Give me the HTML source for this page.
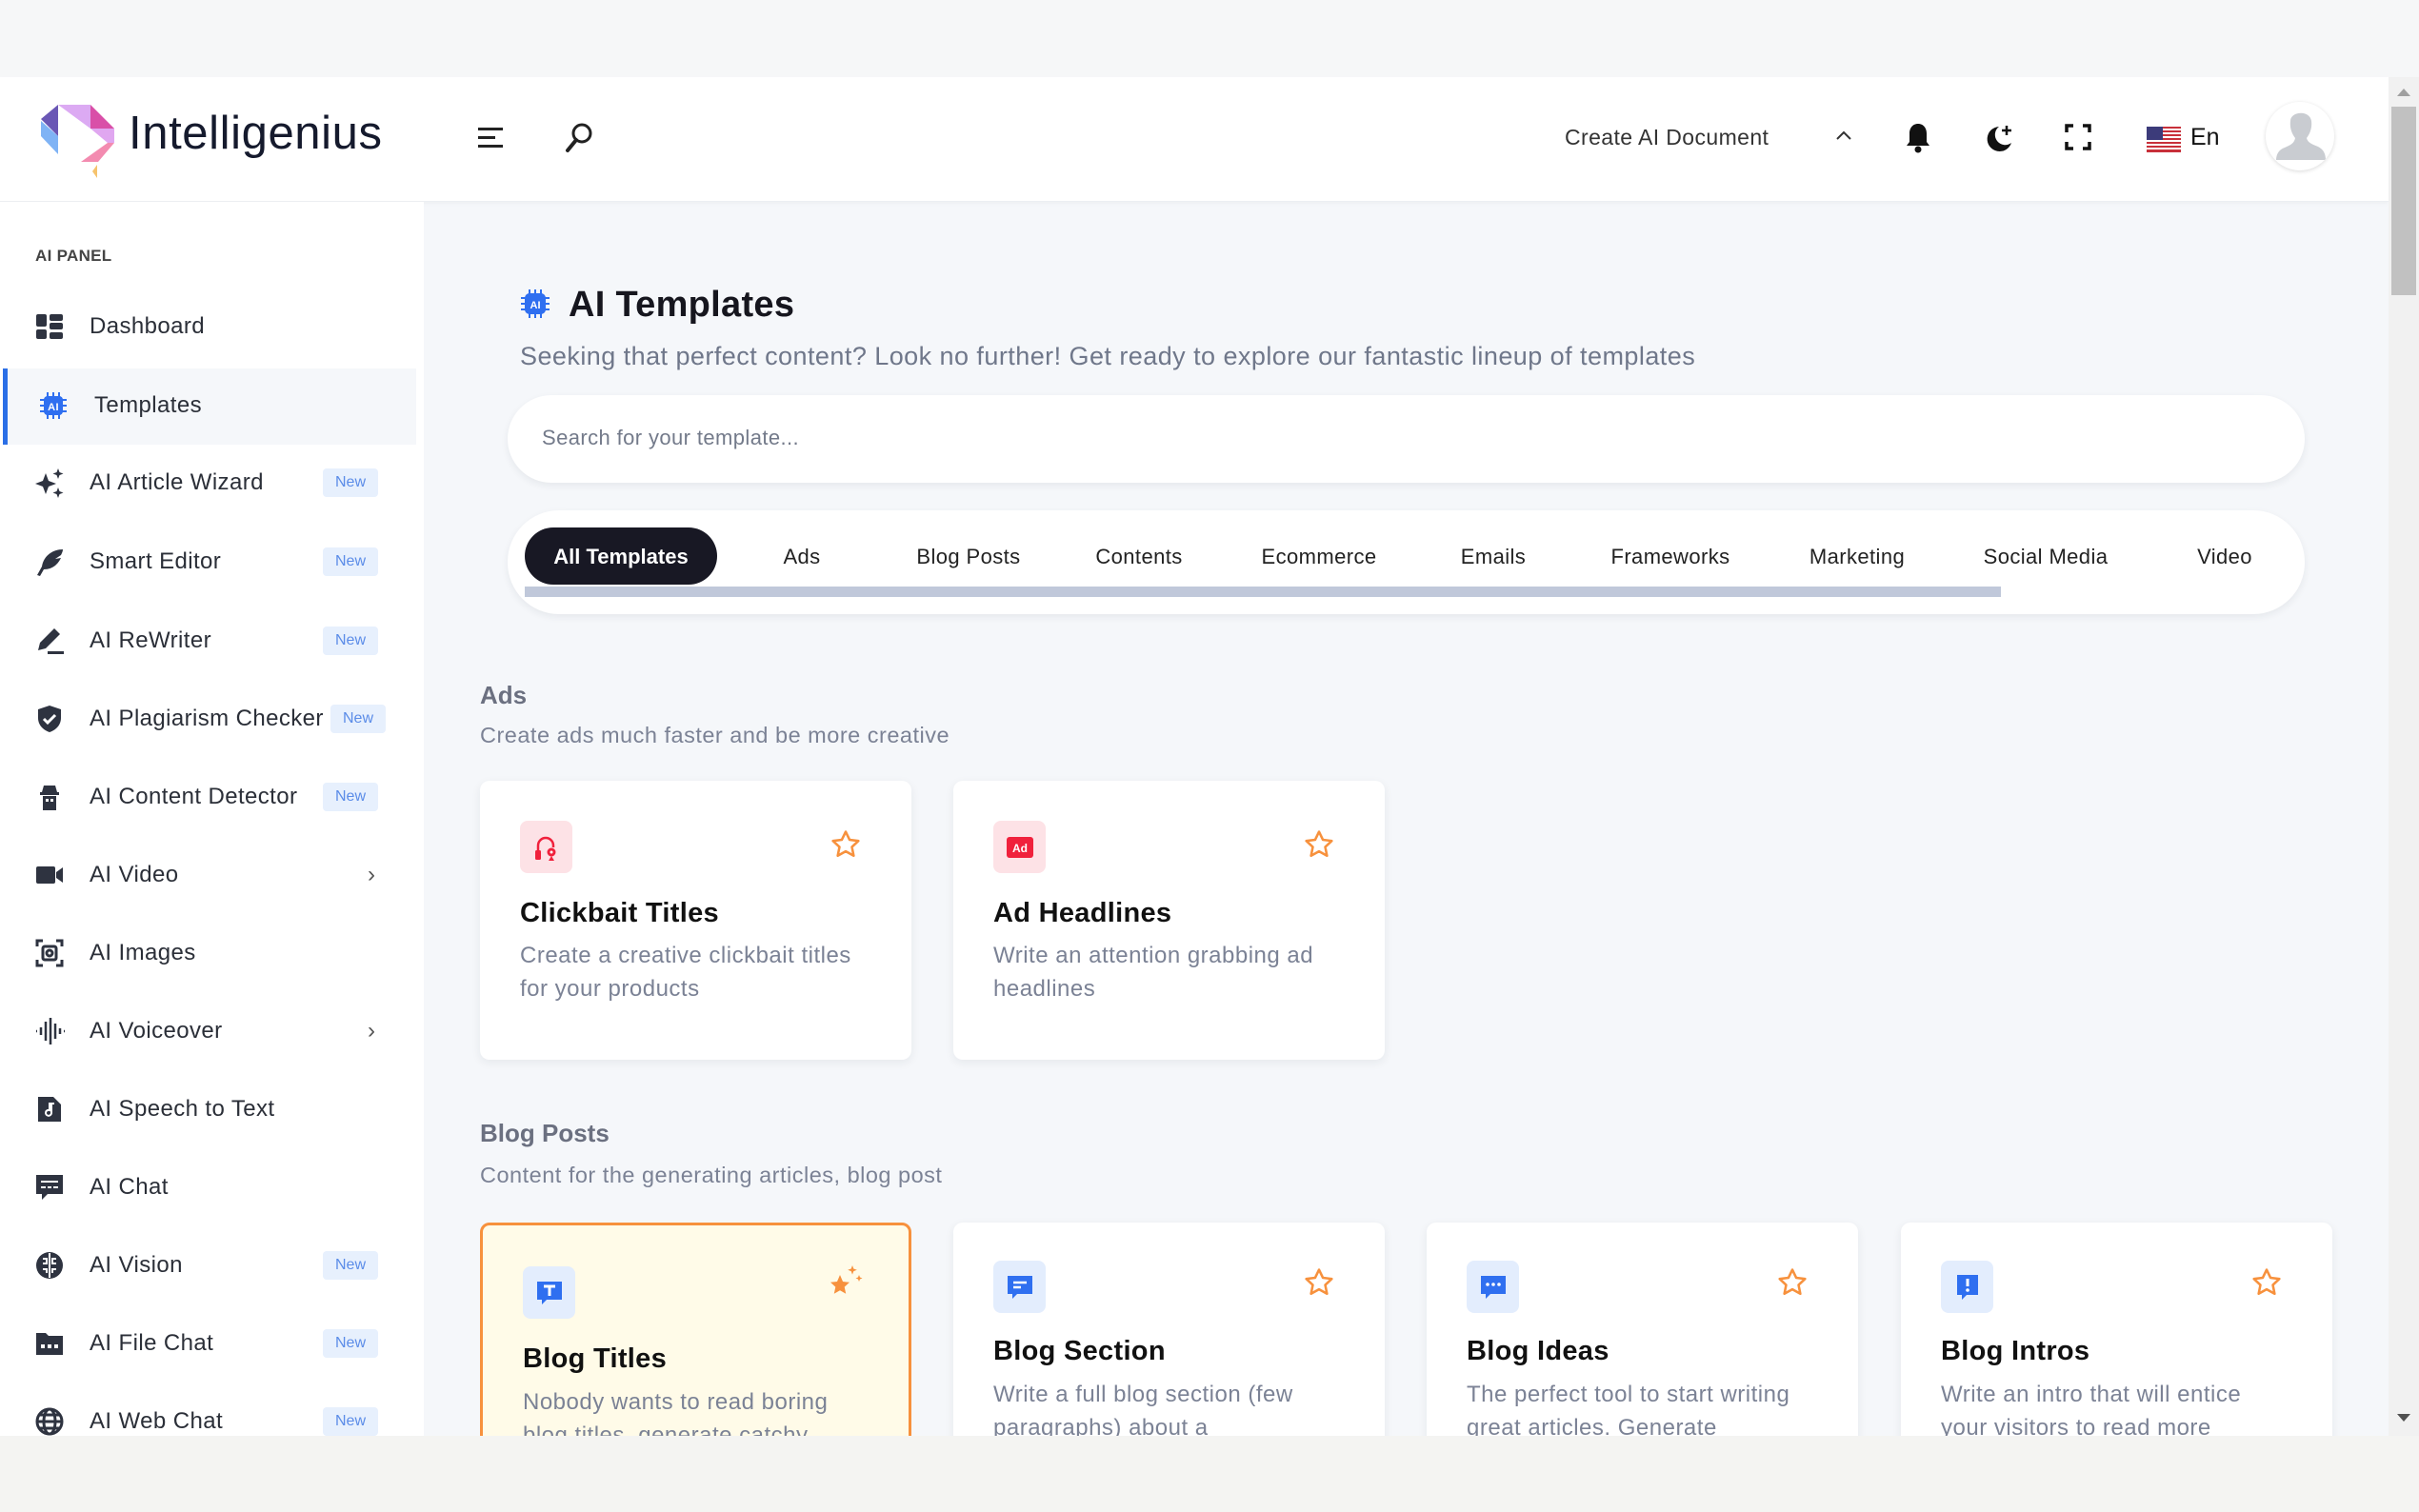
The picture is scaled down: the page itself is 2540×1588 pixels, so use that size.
<!DOCTYPE html>
<html><head><meta charset="utf-8">
<style>
*{box-sizing:border-box;margin:0;padding:0}
body{width:2540px;height:1588px;overflow:hidden;background:#f5f7fa;font-family:"Liberation Sans",sans-serif;position:relative;color:#1f2937}
.a{position:absolute}
.topband{left:0;top:0;width:2540px;height:81px;background:#f6f7f8}
.header{left:0;top:81px;width:2508px;height:131px;background:#fff;border-bottom:1px solid #eceef2;box-shadow:0 2px 4px rgba(0,0,0,.03)}
.side{left:0;top:212px;width:445px;height:1296px;background:#fff}
.botband{left:0;top:1508px;width:2540px;height:80px;background:#f4f4f2}
.sb{left:2508px;top:81px;width:32px;height:1427px;background:#f1f1f1}
.thumb{left:2511px;top:112px;width:26px;height:198px;background:#c1c1c1}
.item{position:absolute;left:0;width:440px;height:60px;display:flex;align-items:center;font-size:24px;color:#2b2f38;letter-spacing:.4px}
.item svg{position:absolute;left:36px;width:32px;height:32px}
.item span.t{position:absolute;left:94px}
.new{position:absolute;left:339px;width:58px;height:30px;background:#e7f0fd;color:#5b8ce8;font-size:16px;border-radius:4px;display:flex;align-items:center;justify-content:center;letter-spacing:0}
.chev{position:absolute;left:386px;font-size:24px;color:#555}
.card{position:absolute;width:453px;background:#fff;border-radius:10px;box-shadow:0 3px 10px rgba(30,40,60,.07)}
.ibox{position:absolute;left:42px;width:55px;height:55px;border-radius:8px;display:flex;align-items:center;justify-content:center}
.ctitle{position:absolute;left:42px;font-size:29px;font-weight:bold;color:#111;letter-spacing:.3px}
.cdesc{position:absolute;left:42px;width:355px;font-size:24px;line-height:35px;color:#7b8295;letter-spacing:.5px}
.star{position:absolute;left:367px;width:34px;height:34px}
.tab{position:absolute;top:572px;font-size:22px;color:#222;transform:translateX(-50%);white-space:nowrap;letter-spacing:.4px}
</style></head><body>
<div class="a topband"></div>
<div class="a header"></div>
<svg class="a" style="left:0;top:90px" width="140" height="110" viewBox="0 90 140 110">
<polygon points="61,110 43,125 61,143" fill="#6a57b5"/>
<polygon points="43,127 61,143 61,162 43,143" fill="#7fb3f5"/>
<polygon points="61,110 95,110 95,135" fill="#dcaaf3"/>
<polygon points="95,110 120,135 95,135" fill="#d94fa8"/>
<polygon points="95,135 120,135 120,150 113,150" fill="#e0a7f0"/>
<polygon points="113,150 120,150 103,170 85,170" fill="#f38bb0"/>
<polygon points="102,173 102,187 97,180" fill="#f6c36d"/>
</svg>
<div class="a" style="left:135px;top:112px;font-size:49px;color:#151a2d;letter-spacing:0.6px">Intelligenius</div>
<svg class="a" style="left:502px;top:132px" width="28" height="26"><rect x="0" y="2" width="26" height="3" fill="#222"/><rect x="0" y="11" width="18" height="3" fill="#222"/><rect x="0" y="20" width="26" height="3" fill="#222"/></svg>
<svg class="a" style="left:592px;top:128px" width="32" height="34" viewBox="0 0 32 34"><circle cx="19" cy="12" r="9" fill="none" stroke="#222" stroke-width="3"/><line x1="13" y1="19" x2="4" y2="30" stroke="#222" stroke-width="4" stroke-linecap="round"/></svg>
<div class="a" style="left:1643px;top:131px;font-size:23px;color:#333;letter-spacing:.4px">Create AI Document</div>
<svg class="a" style="left:1927px;top:136px" width="18" height="12"><polyline points="2,10 9,3 16,10" fill="none" stroke="#333" stroke-width="2"/></svg>
<svg class="a" style="left:2000px;top:128px" width="28" height="34" viewBox="0 0 28 34"><path d="M14 2c-6 0-9 5-9 10v9l-3 4h24l-3-4v-9c0-5-3-10-9-10z" fill="#111"/><circle cx="14" cy="29" r="3.5" fill="#111"/></svg>
<svg class="a" style="left:2082px;top:125px" width="36" height="38" viewBox="0 0 36 38"><path d="M17 8a13 13 0 1 0 13 17a10 10 0 0 1 -13 -17z" fill="#111"/><path d="M25 7v10M20 12h10" stroke="#111" stroke-width="2.5"/></svg>
<svg class="a" style="left:2168px;top:130px" width="28" height="28" fill="none" stroke="#111" stroke-width="3.5"><path d="M2 9V2h7M19 2h7v7M26 19v7h-7M9 26H2v-7"/></svg>
<svg class="a" style="left:2254px;top:133px" width="36" height="27"><rect width="36" height="27" fill="#fff"/><g fill="#c8303a"><rect y="0" width="36" height="2"/><rect y="4" width="36" height="2"/><rect y="8" width="36" height="2"/><rect y="12" width="36" height="2"/><rect y="16" width="36" height="2"/><rect y="20" width="36" height="2"/><rect y="24" width="36" height="3"/></g><rect width="17" height="14" fill="#3c3b7a"/></svg>
<div class="a" style="left:2300px;top:130px;font-size:25px;color:#111">En</div>
<div class="a" style="left:2379px;top:107px;width:72px;height:72px;border-radius:50%;background:#fff;box-shadow:0 1px 4px rgba(0,0,0,.15);overflow:hidden">
<svg width="72" height="72" viewBox="0 0 72 72"><path d="M26 20c0-10 20-12 22 0c1 8-2 14-5 18c1 4 4 6 12 9c6 3 8 8 8 14H11c0-6 3-11 9-13c7-3 10-5 11-10c-3-4-6-10-5-18z" fill="#c9ccd1"/></svg></div>

<div class="a sb"></div><div class="a thumb"></div>
<svg class="a" style="left:2516px;top:92px" width="16" height="10"><polygon points="8,1 15,9 1,9" fill="#a0a0a0"/></svg>
<svg class="a" style="left:2516px;top:1484px" width="16" height="10"><polygon points="1,1 15,1 8,9" fill="#505050"/></svg>

<div class="a side"></div>
<div class="a" style="left:37px;top:259px;font-size:17px;color:#444;font-weight:bold;letter-spacing:.3px">AI PANEL</div>
<div class="a" style="left:3px;top:387px;width:434px;height:80px;background:#f5f7fa;border-left:5px solid #2b6fe6"></div>

<div class="item" style="top:313px"><svg viewBox="0 0 32 32" fill="#2e3340"><rect x="2" y="3" width="11" height="13" rx="2"/><rect x="2" y="19" width="11" height="10" rx="2"/><rect x="16" y="3" width="14" height="7" rx="2"/><rect x="16" y="12" width="14" height="7" rx="2"/><rect x="16" y="22" width="14" height="7" rx="2"/></svg><span class="t">Dashboard</span></div>
<div class="item" style="top:396px"><svg style="left:40px" viewBox="0 0 32 32"><g stroke="#2f6ff0" stroke-width="2"><path d="M10 2v5M16 2v5M22 2v5M10 25v5M16 25v5M22 25v5M2 10h5M2 16h5M2 22h5M25 10h5M25 16h5M25 22h5"/></g><rect x="6" y="6" width="20" height="20" rx="4" fill="#2f6ff0"/><text x="16" y="21" font-size="11" font-weight="bold" fill="#fff" text-anchor="middle" font-family="Liberation Sans">AI</text></svg><span class="t" style="left:99px">Templates</span></div>
<div class="item" style="top:477px"><svg viewBox="0 0 32 32" fill="#2e3340"><path d="M12 6l3 8 8 3-8 3-3 8-3-8-8-3 8-3z"/><path d="M25 1l1.5 4 4 1.5-4 1.5-1.5 4-1.5-4-4-1.5 4-1.5z"/><path d="M25 21l1.5 4 4 1.5-4 1.5-1.5 4-1.5-4-4-1.5 4-1.5z"/></svg><span class="t">AI Article Wizard</span><div class="new">New</div></div>
<div class="item" style="top:560px"><svg viewBox="0 0 32 32" fill="#2e3340"><path d="M30 3c-10 0-20 6-22 18l-5 9 3 1 4-7c10 0 15-6 18-12l-6 1 6-4c1-2 2-4 2-6z"/></svg><span class="t">Smart Editor</span><div class="new">New</div></div>
<div class="item" style="top:643px"><svg viewBox="0 0 32 32" fill="#2e3340"><path d="M21 3l6 6-15 15-8 2 2-8z"/><rect x="14" y="27" width="17" height="3"/></svg><span class="t">AI ReWriter</span><div class="new">New</div></div>
<div class="item" style="top:725px"><svg viewBox="0 0 32 32"><path d="M16 2l12 4v9c0 8-6 13-12 15C10 28 4 23 4 15V6z" fill="#2e3340"/><path d="M10 16l4 4 8-8" stroke="#fff" stroke-width="3" fill="none"/></svg><span class="t">AI Plagiarism Checker</span><div class="new" style="left:347px">New</div></div>
<div class="item" style="top:807px"><svg viewBox="0 0 32 32" fill="#2e3340"><path d="M10 4h12l2 7H8z"/><rect x="6" y="11" width="20" height="3"/><path d="M9 15h14v15H9z"/><rect x="12" y="18" width="3" height="3" fill="#fff"/><rect x="17" y="18" width="3" height="3" fill="#fff"/></svg><span class="t">AI Content Detector</span><div class="new">New</div></div>
<div class="item" style="top:889px"><svg viewBox="0 0 32 32" fill="#2e3340"><rect x="2" y="7" width="20" height="18" rx="2"/><path d="M23 13l7-5v16l-7-5z"/></svg><span class="t">AI Video</span><span class="chev">›</span></div>
<div class="item" style="top:971px"><svg viewBox="0 0 32 32" fill="none" stroke="#2e3340" stroke-width="3"><path d="M3 9V3h6M23 3h6v6M29 23v6h-6M9 29H3v-6"/><rect x="9" y="9" width="14" height="14" rx="2"/><circle cx="16" cy="16" r="3"/></svg><span class="t">AI Images</span></div>
<div class="item" style="top:1053px"><svg viewBox="0 0 32 32" stroke="#2e3340" stroke-width="2.5"><path d="M2 16h1M7 12v8M12 6v20M17 2v28M22 8v16M27 13v6M31 16h1"/></svg><span class="t">AI Voiceover</span><span class="chev">›</span></div>
<div class="item" style="top:1135px"><svg viewBox="0 0 32 32"><path d="M4 3h16l8 8v18H4z" fill="#2e3340"/><path d="M18 10v10a3 3 0 1 1-2-3V10h5" stroke="#fff" stroke-width="2" fill="none"/></svg><span class="t">AI Speech to Text</span></div>
<div class="item" style="top:1217px"><svg viewBox="0 0 32 32"><path d="M2 3h28v20H14l-6 6v-6H2z" fill="#2e3340"/><path d="M7 10h18M7 16h5M14 16h4M20 16h5" stroke="#fff" stroke-width="2"/></svg><span class="t">AI Chat</span></div>
<div class="item" style="top:1299px"><svg viewBox="0 0 32 32"><circle cx="16" cy="16" r="14" fill="#2e3340"/><path d="M16 3v26M9 9h4v5h-4M23 9h-4v5h4M9 20h4v4M23 20h-4v4" stroke="#fff" stroke-width="2" fill="none"/></svg><span class="t">AI Vision</span><div class="new">New</div></div>
<div class="item" style="top:1381px"><svg viewBox="0 0 32 32"><path d="M2 5h10l3 3h15v20H2z" fill="#2e3340"/><rect x="7" y="17" width="4" height="4" fill="#fff"/><rect x="14" y="17" width="4" height="4" fill="#fff"/><rect x="21" y="17" width="4" height="4" fill="#fff"/></svg><span class="t">AI File Chat</span><div class="new">New</div></div>
<div class="item" style="top:1463px"><svg viewBox="0 0 32 32" fill="none" stroke="#2e3340" stroke-width="3"><circle cx="16" cy="16" r="13"/><ellipse cx="16" cy="16" rx="6" ry="13"/><path d="M3 16h26M5 9h22M5 23h22"/></svg><span class="t">AI Web Chat</span><div class="new">New</div></div>

<svg class="a" style="left:546px;top:303px" width="32" height="32" viewBox="0 0 32 32"><g stroke="#2f6ff0" stroke-width="2"><path d="M10 1v5M16 1v5M22 1v5M10 26v5M16 26v5M22 26v5M1 10h5M1 16h5M1 22h5M26 10h5M26 16h5M26 22h5"/></g><rect x="5" y="5" width="22" height="22" rx="5" fill="#2f6ff0"/><text x="16" y="21" font-size="11" font-weight="bold" fill="#fff" text-anchor="middle" font-family="Liberation Sans">AI</text></svg>
<div class="a" style="left:597px;top:299px;font-size:38px;font-weight:bold;color:#16161e;letter-spacing:.3px">AI Templates</div>
<div class="a" style="left:546px;top:359px;font-size:27px;color:#6f778a;letter-spacing:.45px">Seeking that perfect content? Look no further! Get ready to explore our fantastic lineup of templates</div>
<div class="a" style="left:533px;top:415px;width:1887px;height:92px;background:#fff;border-radius:46px;box-shadow:0 3px 8px rgba(30,40,60,.07)"></div>
<div class="a" style="left:569px;top:447px;font-size:22px;color:#737a8a;letter-spacing:.4px">Search for your template...</div>
<div class="a" style="left:533px;top:536px;width:1887px;height:109px;background:#fff;border-radius:54px;box-shadow:0 3px 8px rgba(30,40,60,.07)"></div>
<div class="a" style="left:551px;top:554px;width:202px;height:60px;background:#181824;border-radius:30px"></div>
<div class="a" style="left:551px;top:572px;width:202px;text-align:center;font-size:22px;font-weight:bold;color:#fff">All Templates</div>
<div class="tab" style="left:842px">Ads</div>
<div class="tab" style="left:1017px">Blog Posts</div>
<div class="tab" style="left:1196px">Contents</div>
<div class="tab" style="left:1385px">Ecommerce</div>
<div class="tab" style="left:1568px">Emails</div>
<div class="tab" style="left:1754px">Frameworks</div>
<div class="tab" style="left:1950px">Marketing</div>
<div class="tab" style="left:2148px">Social Media</div>
<div class="tab" style="left:2336px">Video</div>
<div class="a" style="left:551px;top:616px;width:1550px;height:11px;background:#c0c8da"></div>

<div class="a" style="left:504px;top:715px;font-size:26px;font-weight:bold;color:#6b7080">Ads</div>
<div class="a" style="left:504px;top:759px;font-size:23.5px;color:#7b8295;letter-spacing:.5px">Create ads much faster and be more creative</div>

<div class="card" style="left:504px;top:820px;height:293px">
 <div class="ibox" style="top:42px;background:#fde2e6"><svg width="30" height="30" viewBox="0 0 30 30"><path d="M6 22v-9a8 8 0 0 1 16 0v2" stroke="#f0213c" stroke-width="2.5" fill="none"/><rect x="3" y="18" width="6" height="10" rx="1.5" fill="#f0213c"/><circle cx="20" cy="20" r="4.5" fill="#f0213c"/><circle cx="20" cy="20" r="1.5" fill="#fff"/><path d="M17 29h6l-3-5z" fill="#f0213c"/></svg></div>
 <svg class="star" style="top:50px" viewBox="0 0 24 24"><path d="M12 2.5l2.9 6 6.5.8-4.8 4.5 1.3 6.5L12 17l-5.9 3.3 1.3-6.5-4.8-4.5 6.5-.8z" fill="none" stroke="#f7913d" stroke-width="1.8" stroke-linejoin="round"/></svg>
 <div class="ctitle" style="top:123px">Clickbait Titles</div>
 <div class="cdesc" style="top:166px">Create a creative clickbait titles for your products</div>
</div>
<div class="card" style="left:1001px;top:820px;height:293px">
 <div class="ibox" style="top:42px;background:#fde2e6"><svg width="30" height="24" viewBox="0 0 30 24"><rect x="1" y="1" width="28" height="22" rx="3" fill="#f0213c"/><text x="15" y="17" font-size="12" font-weight="bold" fill="#fff" text-anchor="middle" font-family="Liberation Sans">Ad</text></svg></div>
 <svg class="star" style="top:50px" viewBox="0 0 24 24"><path d="M12 2.5l2.9 6 6.5.8-4.8 4.5 1.3 6.5L12 17l-5.9 3.3 1.3-6.5-4.8-4.5 6.5-.8z" fill="none" stroke="#f7913d" stroke-width="1.8" stroke-linejoin="round"/></svg>
 <div class="ctitle" style="top:123px">Ad Headlines</div>
 <div class="cdesc" style="top:166px">Write an attention grabbing ad headlines</div>
</div>

<div class="a" style="left:504px;top:1175px;font-size:26px;font-weight:bold;color:#6b7080">Blog Posts</div>
<div class="a" style="left:504px;top:1221px;font-size:23.5px;color:#7b8295;letter-spacing:.5px">Content for the generating articles, blog post</div>

<div class="card" style="left:504px;top:1284px;height:300px;background:#fffbe8;border:3px solid #f7913d;box-shadow:none">
 <div class="ibox" style="left:42px;top:43px;background:#e3edfd"><svg width="30" height="30" viewBox="0 0 30 30"><path d="M2 3h26v19H12l-5 5v-5H2z" fill="#2f6ff0"/><path d="M9 8h12M15 8v10" stroke="#fff" stroke-width="3"/></svg></div>
 <svg class="star" style="left:361px;top:40px;width:40px;height:40px" viewBox="0 0 40 40"><path d="M14 12l3 7 7 .8-5.3 4.8 1.5 7.2L14 28.2l-6.2 3.6 1.5-7.2L4 19.8l7-.8z" fill="#f7913d"/><path d="M27 2l1.3 3.5 3.5 1.3-3.5 1.3L27 11.6l-1.3-3.5-3.5-1.3 3.5-1.3zM34 12l1 2.5 2.5 1-2.5 1-1 2.5-1-2.5-2.5-1 2.5-1z" fill="#f7913d"/></svg>
 <div class="ctitle" style="top:124px">Blog Titles</div>
 <div class="cdesc" style="top:168px">Nobody wants to read boring blog titles, generate catchy</div>
</div>
<div class="card" style="left:1001px;top:1284px;height:300px">
 <div class="ibox" style="top:40px;background:#e3edfd"><svg width="30" height="30" viewBox="0 0 30 30"><path d="M2 3h26v19H12l-5 5v-5H2z" fill="#2f6ff0"/><path d="M8 10h14M8 15h8" stroke="#fff" stroke-width="2.5"/></svg></div>
 <svg class="star" style="top:46px" viewBox="0 0 24 24"><path d="M12 2.5l2.9 6 6.5.8-4.8 4.5 1.3 6.5L12 17l-5.9 3.3 1.3-6.5-4.8-4.5 6.5-.8z" fill="none" stroke="#f7913d" stroke-width="1.8" stroke-linejoin="round"/></svg>
 <div class="ctitle" style="top:119px">Blog Section</div>
 <div class="cdesc" style="top:163px">Write a full blog section (few paragraphs) about a</div>
</div>
<div class="card" style="left:1498px;top:1284px;height:300px">
 <div class="ibox" style="top:40px;background:#e3edfd"><svg width="30" height="30" viewBox="0 0 30 30"><path d="M2 3h26v19H12l-5 5v-5H2z" fill="#2f6ff0"/><circle cx="9" cy="12" r="1.8" fill="#fff"/><circle cx="15" cy="12" r="1.8" fill="#fff"/><circle cx="21" cy="12" r="1.8" fill="#fff"/></svg></div>
 <svg class="star" style="top:46px" viewBox="0 0 24 24"><path d="M12 2.5l2.9 6 6.5.8-4.8 4.5 1.3 6.5L12 17l-5.9 3.3 1.3-6.5-4.8-4.5 6.5-.8z" fill="none" stroke="#f7913d" stroke-width="1.8" stroke-linejoin="round"/></svg>
 <div class="ctitle" style="top:119px">Blog Ideas</div>
 <div class="cdesc" style="top:163px">The perfect tool to start writing great articles. Generate</div>
</div>
<div class="card" style="left:1996px;top:1284px;height:300px">
 <div class="ibox" style="top:40px;background:#e3edfd"><svg width="30" height="30" viewBox="0 0 30 30"><path d="M4 2h22v21H14l-5 5v-5H4z" fill="#2f6ff0"/><path d="M15 6v8" stroke="#fff" stroke-width="3"/><circle cx="15" cy="18" r="1.8" fill="#fff"/></svg></div>
 <svg class="star" style="top:46px" viewBox="0 0 24 24"><path d="M12 2.5l2.9 6 6.5.8-4.8 4.5 1.3 6.5L12 17l-5.9 3.3 1.3-6.5-4.8-4.5 6.5-.8z" fill="none" stroke="#f7913d" stroke-width="1.8" stroke-linejoin="round"/></svg>
 <div class="ctitle" style="top:119px">Blog Intros</div>
 <div class="cdesc" style="top:163px">Write an intro that will entice your visitors to read more</div>
</div>

<div class="a botband"></div>
</body></html>
